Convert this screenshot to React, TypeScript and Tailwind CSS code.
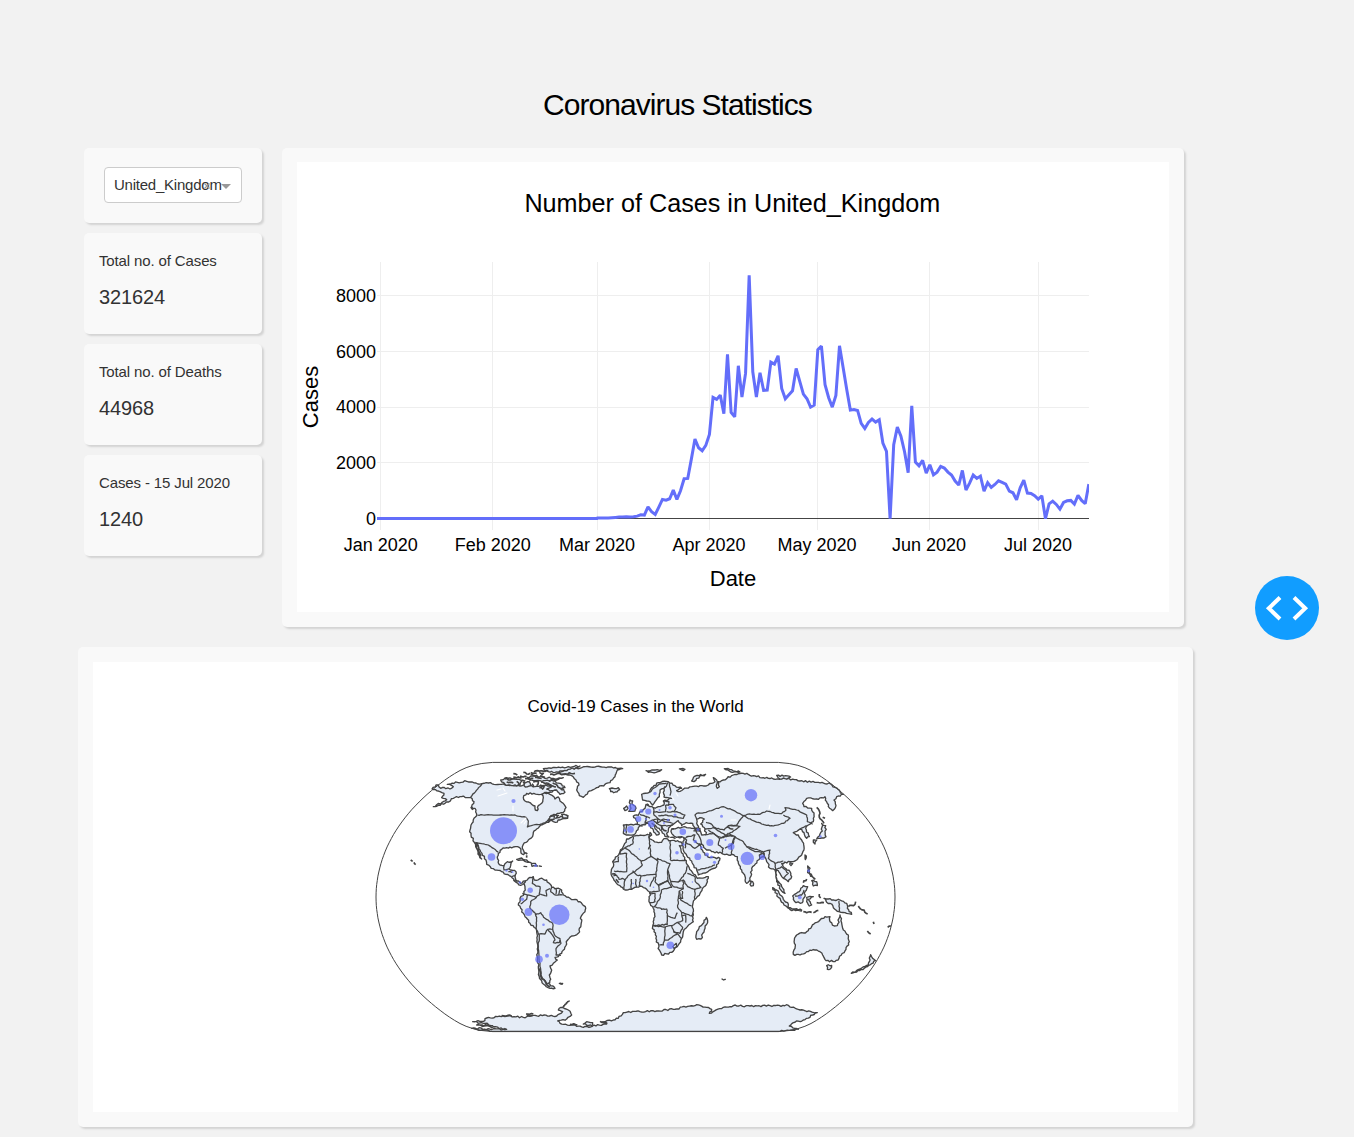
import React from "react";

type Point = [number, number];

const parse = (s: string): Point[] =>
  s.trim().split(/\s+/).map((p) => p.split(",").map(Number) as Point);

// Subdivides a line and nudges the inner points so coasts look irregular.
const rough = (s: string, closed: boolean, amp = 2.6): string => {
  const pts = parse(s);
  if (closed) pts.push(pts[0]);
  const out: string[] = [];
  pts.slice(0, -1).forEach(([x, y], i) => {
    const [nx, ny] = pts[i + 1];
    const len = Math.hypot(nx - x, ny - y);
    const n = len > 400 ? 1 : Math.max(1, Math.round(len / 5.5));
    for (let k = 0; k < n; k++) {
      const t = k / n;
      const seed = Math.sin((x + i * 7 + k * 13) * 12.9898 + y * 78.233) * 43758.5453;
      const off = k === 0 ? 0 : (seed - Math.floor(seed) - 0.5) * 2 * amp;
      const px = x + (nx - x) * t - (off * (ny - y)) / len;
      const py = y + (ny - y) * t + (off * (nx - x)) / len;
      out.push(`${px.toFixed(1)},${py.toFixed(1)}`);
    }
  });
  if (!closed) out.push(pts[pts.length - 1].join(","));
  return "M" + out.join("L") + (closed ? "Z" : "");
};

const DAILY = [
  774, 774, 774, 774, 773, 772, 771, 771, 770, 771, 770, 768, 764, 765, 740, 755, 763, 741, 718, 720, 716, 690, 718, 692, 656, 655, 597, 537, 563, 572, 556,
  523, 412, 418, 405, 461, 283, 457, 470, 317, 411, 340, 46, 335, 411, 338, 391, 390, 306, 312, 287, 385, 416, 404, 392, 325, 364, 402, 416, 441, 435,
  269, 258, 374, 413, 441, 406, 257, 322, 388, 450, 448, 451, 490, 505, 487, 477, 486, 479, 549, 574, 776, 554, 501, 528, 575, 638, 437, 606, 617, 601, 639,
  614, 644, 636, 619, 624, 636, 645, 663, 675, 631, 690, 669, 645, 655, 648, 693, 668, 682, 673, 662, 667, 672, 693, 698, 719, 683, 660, 699, 700, 707,
  717, 707, 776, 731, 723, 733, 747, 727, 722, 721, 732, 706, 721, 731, 672,
];
const MONTHS: [string, number][] = [
  ["Jan 2020", 380.5], ["Feb 2020", 492.5], ["Mar 2020", 597.5], ["Apr 2020", 709.5],
  ["May 2020", 817.5], ["Jun 2020", 929.5], ["Jul 2020", 1038.5],
];
const LEVELS: [string, number][] = [["8000", 295.5], ["6000", 351.5], ["4000", 407.5], ["2000", 462.5]];

function CasesChart() {
  const line =
    "M377,518.5 L597,518.5 " +
    DAILY.map((v, i) => `L${(597.4 + i * 3.6135).toFixed(2)},${(260.1 + v / 3).toFixed(2)}`).join(" ");
  return (
    <svg viewBox="297 162 872 450" className="block h-[450px] w-[872px] bg-white font-['Liberation_Sans',sans-serif]">
      <defs>
        <clipPath id="plot"><rect x="377" y="262" width="712" height="258" /></clipPath>
      </defs>
      <text x="732.3" y="212" textAnchor="middle" fontSize="25.2">Number of Cases in United_Kingdom</text>
      <g stroke="#eeeeee" shapeRendering="crispEdges">
        {MONTHS.map(([m, x]) => <path key={m} d={`M${x},262V530`} />)}
        {LEVELS.map(([l, y]) => <path key={l} d={`M377,${y}H1089`} />)}
      </g>
      <path d="M377,518.5H1089" stroke="#444" shapeRendering="crispEdges" />
      <path d={line} fill="none" stroke="#636efa" strokeWidth="3" strokeMiterlimit="2" clipPath="url(#plot)" />
      {MONTHS.map(([m, x]) => <text key={m} x={x > 590 ? x - 0.4 : x + 0.3} y="551" textAnchor="middle" fontSize="18">{m}</text>)}
      {LEVELS.map(([l, y]) => <text key={l} x="376" y={l === "4000" ? 413 : y + 6.2} textAnchor="end" fontSize="18">{l}</text>)}
      <text x="376" y="525" textAnchor="end" fontSize="18">0</text>
      <text x="733" y="586" textAnchor="middle" fontSize="22">Date</text>
      <text transform="translate(318 397) rotate(-90)" textAnchor="middle" fontSize="22">Cases</text>
    </svg>
  );
}

// Outline of the globe in the Natural Earth projection.
const globe = (() => {
  const pts: string[] = [];
  const edge = (side: number, deg: number) => {
    const p = (deg * Math.PI) / 180;
    const p2 = p * p;
    const p4 = p2 * p2;
    const x = side * Math.PI * (0.8707 - 0.131979 * p2 + p4 * (-0.013791 + p4 * (0.003971 * p2 - 0.001529 * p4)));
    const y = p * (1.007226 + p2 * (0.015085 + p4 * (-0.044475 + 0.028874 * p2 - 0.005916 * p4)));
    pts.push(`${(635.5 + 94.85 * x).toFixed(1)},${(897 - 94.6 * y).toFixed(1)}`);
  };
  for (let d = -90; d <= 90; d += 2.5) edge(1, d);
  for (let d = 90; d >= -90; d -= 2.5) edge(-1, d);
  return "M" + pts.join("L") + "Z";
})();

interface Region { x: number; y: number; land: string[]; lakes?: string[]; borders?: string[]; marks?: string[] }

const REGIONS: Region[] = [
  {
    // North and Central America
    x: 370, y: 755,
    land: [
      "186,102 198,90 205,90 212,100 222,97 240,102 250,95 232,88 262,82 290,79 318,84 336,86 355,84 372,88 395,88 420,92 440,92 460,90 478,92 500,94 515,94 528,90 545,95 562,103 540,112 518,117 470,115 460,128 465,138 485,148 495,153 496,165 502,167 505,152 515,145 520,128 514,118 530,112 540,118 555,132 565,126 575,142 588,158 584,168 568,175 552,178 540,186 555,180 566,181 557,190 572,184 594,182 592,190 570,195 556,202 545,196 530,202 512,210 500,222 490,232 488,244 475,255 460,268 457,275 462,290 461,299 453,294 449,278 430,276 410,278 395,283 385,295 383,312 390,330 402,332 412,320 428,318 422,332 416,342 438,350 435,365 440,378 452,385 465,378 474,384 464,385 452,391 438,382 426,368 408,358 395,350 375,345 350,328 348,315 336,295 325,275 318,264 324,285 335,312 328,302 317,275 313,262 303,240 300,225 303,210 312,190 320,182 318,165 305,155 312,140 303,128 270,125 250,130 225,145 190,155 216,142 230,134 215,128 222,115 210,110",
    ],
    borders: [
      "336,86 302,126", "322,180 435,180 450,184 468,187 475,198 472,216 490,210 510,208 530,200 542,188",
      "316,262 335,266 355,270 370,280 385,292", "402,332 402,345 415,342", "415,350 426,352", "426,365 437,362", "440,378 430,376",
    ],
    marks: ["122,315 128,319", "132,322 137,329", "303,155 310,164", "320,262 332,304"],
  },
  {
    // Canadian Arctic, Greenland, Iceland and the Caribbean
    x: 500, y: 755,
    land: [
      "130,41 170,38 205,35 240,33 225,42 190,48 165,52 145,50",
      "118,70 140,75 160,78 180,85 195,98 185,100 195,112 180,118 170,105 150,108 140,102 155,95 145,85 125,82",
      "82,67 110,62 130,67 160,70 190,68 170,75 120,77 90,75",
      "2,75 20,68 45,72 65,78 60,90 35,92 15,88", "70,82 88,80 92,92 76,96",
      "172,55 205,43 245,38 290,34 330,36 368,41 352,45 345,65 330,83 290,98 268,108 250,127 238,122 230,105 237,90 228,75 210,60",
      "328,101 336,99 344,101 355,98 359,104 346,111 332,110",
      "50,313 65,309 80,315 93,323 74,319", "94,326 106,325 113,333 96,334", "72,334 80,335", "118,333 124,334",
      "185,178 202,182 203,190 188,188", "150,185 163,183 162,193 145,199",
    ],
    marks: [
      "40,56 52,60", "70,52 80,57 90,55", "60,63 80,65", "92,53 110,55", "118,52 130,55 124,60", "15,72 30,75 45,70", "20,81 40,84", "75,71 90,74 100,70",
      "64,75 76,79", "92,58 112,61", "120,62 135,67", "100,82 115,80 110,92", "120,90 132,92 128,102 118,98", "96,86 102,96", "105,67 125,70", "150,58 190,57 225,55", "102,50 145,47", "40,66 65,69",
      "132,84 150,92 168,96", "158,84 172,92 188,106", "50,79 58,88", "72,293 82,297", "80,301 80,308",
    ],
  },
  {
    // South America
    x: 500, y: 860,
    land: [
      "72,70 82,60 90,52 100,50 103,60 120,56 140,60 150,72 155,82 170,85 185,90 190,105 210,115 240,125 256,140 255,155 243,170 243,195 235,220 215,228 203,240 197,258 185,280 175,290 165,292 172,300 160,310 150,318 155,330 148,345 152,358 145,370 165,385 150,385 130,372 118,350 115,320 112,290 112,250 108,205 90,190 75,170 62,145 55,135 60,115 72,100 75,85",
      "178,370 188,370 186,373",
    ],
    borders: [
      "100,52 97,70 108,78 120,80 118,105 108,112 82,105 67,100", "82,105 80,118 62,132", "110,112 92,125 90,145 105,158",
      "120,102 140,108 138,92 150,86", "155,82 152,95 163,104 188,105", "168,86 168,102", "180,90 175,104", "105,158 110,172 108,205 118,225 115,260 120,320 125,350 143,372",
      "105,165 122,158 135,175 158,190 158,208 143,208 135,222 118,222", "143,208 158,226 165,240 160,248 178,248 180,236 166,228 158,208", "180,240 183,250 168,266 168,285 183,286",
    ],
    marks: ["119,325 123,350 140,374", "138,372 150,380"],
  },
  {
    // Africa
    x: 600, y: 830,
    land: [
      "80,27 100,18 148,15 150,27 175,38 185,37 192,26 212,32 243,36 247,47 238,47 250,78 265,108 280,132 292,145 325,140 320,160 300,190 285,208 278,225 280,255 280,275 262,290 250,305 245,325 235,345 215,367 185,375 178,360 170,330 158,290 165,260 160,235 147,215 150,190 140,178 120,168 95,178 75,180 55,165 40,145 33,128 40,110 38,95 60,65 72,45",
      "319,262 323,272 313,300 303,327 290,328 290,305 298,290 308,282",
    ],
    borders: [
      "100,20 98,42 75,53 60,65", "75,53 123,92 127,105 105,125 83,138", "60,65 60,72 80,70 80,125 42,123", "38,95 55,95 56,80", "148,18 152,80 123,95", "152,45 145,58", "152,78 172,92 172,85 212,102",
      "211,33 211,90", "211,91 259,91", "174,92 170,115 168,133 125,138 110,135 98,122", "210,102 203,120 204,150 175,165 165,155 168,133", "204,121 212,154 235,156 256,130 262,108", "40,138 50,136 57,148 67,145 75,150 83,138",
      "75,150 72,177", "94,147 94,177", "107,147 109,172", "123,138 117,168", "163,140 150,170", "175,165 178,183 150,186", "175,166 204,152 215,172 184,180 180,205 163,230", "212,155 220,170 250,176 250,150 237,155",
      "250,150 263,170 285,178 303,172 286,155 285,140 262,130", "250,176 238,183 242,210 275,228", "285,178 284,207", "238,183 235,205 233,232 245,247 275,258 280,250", "160,230 183,235 185,238 200,237 202,257 225,265 232,248", "202,257 202,283 160,287 196,291 215,287 230,278 248,272 245,248",
      "196,291 195,310 190,345 178,345", "192,330 205,330 220,318 233,312 222,305 215,288", "220,305 240,310 248,292 233,278", "233,312 244,325", "220,347 229,340 230,350 222,355 218,348", "148,190 165,190 165,215 150,218", "235,205 248,205 247,183", "245,258 257,255 257,278",
    ],
    marks: ["36,132 48,135", "48,148 56,158"],
  },
  {
    // Europe and Asia
    x: 600, y: 755,
    land: [
      "70,235 72,222 70,210 95,208 112,208 108,195 100,183 115,181 120,170 135,160 138,148 145,152 160,158 180,155 192,150 190,138 215,130 192,126 190,112 195,95 180,105 178,118 178,125 165,140 158,150 150,140 140,138 128,135 125,118 148,112 155,98 175,83 205,80 225,92 245,100 230,107 240,109 250,103 275,95 300,92 325,90 345,80 340,68 350,75 352,100 358,95 355,80 370,75 400,60 430,55 460,62 490,68 520,72 550,70 600,78 650,82 692,87 730,118 710,125 702,135 708,152 698,167 685,155 675,125 665,128 650,132 620,130 608,145 612,155 635,160 642,180 640,200 625,210 617,220 628,245 620,250 612,233 600,222 580,233 595,240 605,255 612,275 605,300 590,315 570,320 545,325 550,335 570,350 575,365 565,380 550,370 540,355 530,345 530,370 545,395 555,415 545,408 530,380 525,345 510,340 500,320 492,305 480,310 455,340 450,375 440,385 430,355 415,325 412,305 395,298 385,300 365,295 340,290 320,285 305,268 298,267 315,300 330,308 345,308 360,310 350,335 320,352 295,360 290,345 270,315 250,285 247,270 252,250 245,245 225,245 215,235 215,222 235,217 260,218 285,222 278,205 258,203 245,212 235,197 220,208 210,215 205,225 200,235 207,246 195,244 185,228 165,210 156,205 170,225 178,237 169,240 160,225 145,205 125,210 115,218 100,240 85,240 75,238",
      "88,143 90,135 98,138 96,147 108,160 105,168 86,169 93,160", "71,160 80,153 84,160 75,167",
      "275,78 280,68 292,61 317,58 290,70 282,80", "373,41 395,44 420,51 398,52", "530,61 572,66 560,72 535,69", "138,47 155,45 172,44 185,44 168,52 145,52", "238,42 255,43 245,45",
      "451,378 458,380 460,392 453,393", "665,205 677,212 678,245 665,249 650,252 660,237 667,228", "640,255 650,256 645,267 640,262", "615,300 619,303 616,314", "570,323 578,326 573,332", "212,247 225,250", "150,232 155,240 150,244", "235,247 244,247",
    ],
    lakes: ["290,193 300,188 313,192 308,202 302,207 315,222 318,238 305,240 298,225 290,205"],
    borders: [
      "205,82 195,98", "150,112 160,100 178,87 200,84", "208,85 213,110 210,122", "140,185 135,205 152,198 160,195 175,192 162,180 160,158", "120,178 140,185 150,190", "160,170 180,172 197,170 197,150", "200,170 230,170 255,180 250,190 225,185 195,180 175,182", "197,150 220,148 228,158 222,170", "175,192 195,200 220,205", "175,192 170,205 185,212 205,212 218,210", "185,212 185,225", "160,195 170,205 190,192 210,195", "190,138 207,140 205,152", "110,208 128,213", "80,210 78,236", "215,222 222,222",
      "290,193 285,180 290,175 318,172 345,162 370,155 395,164 430,182 450,177 480,178 500,168 530,175 545,176 558,165 555,158 590,165 620,180 622,200 638,208", "430,182 420,195 410,210 385,212 372,225 345,218 330,205 318,202", "430,182 455,195 490,208 520,213 550,205 570,190 550,180", "315,222 340,218 360,230 375,240 385,235 370,248 355,245 325,225", "385,212 400,212 420,214 405,225 388,235 398,242 375,245", "315,240 340,235 358,250 355,270 370,280 365,295", "358,250 385,240 405,245 400,265 375,280", "285,222 298,245 305,267", "260,245 285,240 280,255 300,270 285,280 255,260", "252,250 265,245", "405,245 430,260 440,275 475,285 490,290 492,305", "405,245 395,268 395,298", "440,275 465,290 488,292", "485,295 478,300 480,312", "492,290 510,285 505,310 525,325 550,318", "525,325 527,345 545,335 565,355 550,370", "480,300 492,295 495,308", "292,345 325,338 345,330", "250,247 260,255 255,280", "283,220 300,220 300,228 280,228", "600,222 620,212",
    ],
    marks: ["650,157 660,175 658,187 672,205", "668,187 675,190", "140,147 146,150", "184,212 192,226 200,228", "283,222 298,224", "380,216 400,222"],
  },
  {
    // South-east Asia and Oceania
    x: 740, y: 840,
    land: [
      "98,143 110,150 125,168 145,193 145,205 132,195 115,172", "145,203 165,207 185,210 184,213 150,209", "158,168 178,155 190,137 203,140 195,155 195,170 187,188 168,188 160,178", "203,78 210,85 208,100 216,108 203,98", "215,122 230,125 232,137 220,138",
      "200,172 220,170 205,178 215,195 208,198 200,185", "252,175 265,177 275,180 300,180 320,190 322,205 335,223 315,218 297,215 280,203 275,192 260,187",
      "160,343 165,325 163,300 170,285 200,275 215,260 230,247 240,240 255,230 270,230 270,245 283,258 292,257 300,225 308,265 325,285 328,305 318,328 297,355 285,365 258,362 248,345 240,335 225,330 200,335 180,345",
      "260,377 275,376 271,387 262,388", "334,400 360,387 385,375 388,365 392,344 398,355 407,362 382,380 350,396",
    ],
    borders: ["297,182 299,215", "165,168 185,165 192,150"],
    marks: ["190,215 215,217", "220,218 235,211", "190,128 200,117", "210,108 226,118", "230,188 252,188", "238,162 242,174", "325,200 345,193 347,185", "355,198 383,222", "382,273 392,282", "400,245 402,252", "443,262 453,258"],
  },
  {
    // Antarctica
    x: 440, y: 970,
    land: [
      "95,175 200,178 150,170 110,165 158,167 135,160 98,155 130,154 140,144 200,138 250,142 280,136 350,138 368,125 355,120 388,93 368,112 385,120 395,135 380,147 353,153 360,160 400,165 430,172 500,162 485,156 520,150 535,145 550,128 600,125 650,123 700,118 770,104 800,112 815,118 808,130 850,112 880,107 930,108 1045,106 1080,120 1132,128 1090,150 1060,158 1048,168 1075,178 1020,184 150,184",
      "430,162 440,155 458,158 456,168", "846,27 856,28",
    ],
    marks: ["258,132 280,132", "260,137 278,137", "185,137 215,138", "390,163 412,165", "480,154 502,161"],
  },
];

const BUBBLES: [number, number, number][] = [
  [503.5, 830.7, 13.5], [559.3, 914.8, 10.2], [751, 795.2, 6.2], [747.3, 858.4, 6.7], [491.5, 857, 3.8], [528.5, 912, 3.9], [539, 959.3, 3.8],
  [632, 807.4, 3.7], [630.5, 829.4, 3.4], [638.4, 819, 2.9], [648.3, 811.5, 3.1], [651.3, 824, 3.5], [670.3, 945.3, 3.8], [697.8, 856.7, 3.4],
  [709.8, 842.5, 3.5], [682.8, 831.7, 3.3], [731, 846.5, 3.5], [762.2, 857.2, 2.8], [513.5, 801, 2.1], [530.2, 890.3, 2.7], [522.3, 899.3, 1.8],
  [547, 955.8, 2], [543.5, 924.8, 1.3], [535.7, 865.4, 1.5], [775.5, 835.5, 1.8], [721.5, 816.3, 1.5], [799.8, 897.4, 1.9], [808.6, 870.7, 1.5],
  [655, 793.5, 1.7], [670, 807.8, 1.8], [675, 815, 1.6], [659.5, 810, 1], [695.2, 841.5, 1.8], [677, 852.7, 1.8], [707, 854.5, 2], [711.5, 857, 1.6],
  [714.5, 862.3, 1.6], [701.5, 847.7, 1.4], [683.5, 844.5, 1.3], [725.5, 840, 1], [641.5, 811, 2.1], [668, 820, 1.3], [664, 823, 1], [647, 881, 1.2],
  [653.5, 887.2, .8], [633.2, 883.5, .8], [692.4, 882, .7], [512.5, 872, 1], [506.5, 870.6, 1.2], [520, 882.5, 1.3], [625, 830.5, 1.3],
  [820.5, 836.5, 1.2], [646, 819, 1.1], [698, 829.5, 1.5], [639.3, 849, .7],
];

function WorldMap() {
  return (
    <svg viewBox="93 662 1085 450" className="block h-[450px] w-[1085px] bg-white font-['Liberation_Sans',sans-serif]">
      <text x="635.6" y="712" textAnchor="middle" fontSize="17">Covid-19 Cases in the World</text>
      {REGIONS.map((r, i) => (
        <g key={i} transform={`translate(${r.x} ${r.y}) scale(.33333)`} fill="none" stroke="#444" strokeWidth="4" strokeLinejoin="round">
          {r.land.map((p) => <path key={p} d={rough(p, true)} fill="#e5ecf6" />)}
          {r.lakes?.map((p) => <path key={p} d={rough(p, true)} fill="#fff" />)}
          {r.borders?.map((p) => <path key={p} d={rough(p, false, 1.3)} strokeWidth="3.8" />)}
          {r.marks?.map((p) => <path key={p} d={rough(p, false, 2.5)} strokeWidth="5" />)}
        </g>
      ))}
      <path
        d="M497,790l4,-1M498,796l9,-3M503,788l2,3M513,806v5M521,823l5,-5M524,824l2,-3M769,809l1,-4M731,820h5M672,797l2,3M676,793l2,3"
        stroke="#fff"
        strokeWidth="1.1"
        strokeLinecap="round"
      />
      <path d={globe} fill="none" stroke="#444" strokeWidth="1" />
      <g fill="#636efa" fillOpacity=".7">
        {BUBBLES.map(([x, y, r]) => <circle key={`${x}-${y}`} cx={x} cy={y} r={r} />)}
      </g>
    </svg>
  );
}

const CARD = "rounded-[5px] bg-[#f9f9f9] shadow-[2px_2px_2px_lightgrey]";

function Stat({ label, value }: { label: string; value: string }) {
  return (
    <div className={`${CARD} h-[101px] px-[15px] pt-[16px]`}>
      <p className="text-[15px] leading-6 tracking-[-0.13px]">{label}</p>
      <p className="mt-2.5 text-[20px] leading-7 tracking-[-0.1px]">{value}</p>
    </div>
  );
}

export default function App() {
  return (
    <div className="relative h-[1137px] w-[1354px] overflow-hidden bg-[#f2f2f2] pt-[87px] font-['Liberation_Sans',sans-serif] text-[#323232]">
      <h1 className="pl-px text-center text-[30px] leading-9 tracking-[-0.97px] text-black">Coronavirus Statistics</h1>
      <main className="mt-[25px] flex items-start gap-5 pl-[84px]">
        <div className="flex w-[178px] flex-col gap-2.5">
          <div className={`${CARD} h-[75px] px-5 pt-[19px]`}>
            <div className="relative flex h-9 items-center rounded-[4px] border border-[#ccc] bg-white pl-[9px] text-[15px] text-[#333]">
              <span className="tracking-[-0.23px]">United_Kingdom</span>
              <svg viewBox="0 0 6 6" className="absolute left-[99px] top-[15px] size-[6px]" stroke="#999" strokeWidth="1.2">
                <path d="M.5.5l5 5M5.5.5l-5 5" />
              </svg>
              <span className="absolute left-[116px] top-4 border-x-5 border-t-5 border-x-transparent border-t-[#999]" />
            </div>
          </div>
          <Stat label="Total no. of Cases" value="321624" />
          <Stat label="Total no. of Deaths" value="44968" />
          <Stat label="Cases - 15 Jul 2020" value="1240" />
        </div>
        <section className={`${CARD} h-[479px] w-[902px] px-[15px] pt-[14px]`}>
          <CasesChart />
        </section>
      </main>
      <section className={`${CARD} ml-[78px] mt-5 h-[480px] w-[1115px] p-[15px]`}>
        <WorldMap />
      </section>
      <button aria-label="Developer tools" className="absolute left-[1255px] top-[576px] flex size-16 items-center justify-center rounded-full bg-[#119dff]">
        <svg viewBox="0 0 64 64" className="size-16" fill="none" stroke="#fff" strokeWidth="4">
          <path d="M25 21.5 13.8 32.3 25 43M39 21.5 50.2 32.3 39 43" />
        </svg>
      </button>
    </div>
  );
}
